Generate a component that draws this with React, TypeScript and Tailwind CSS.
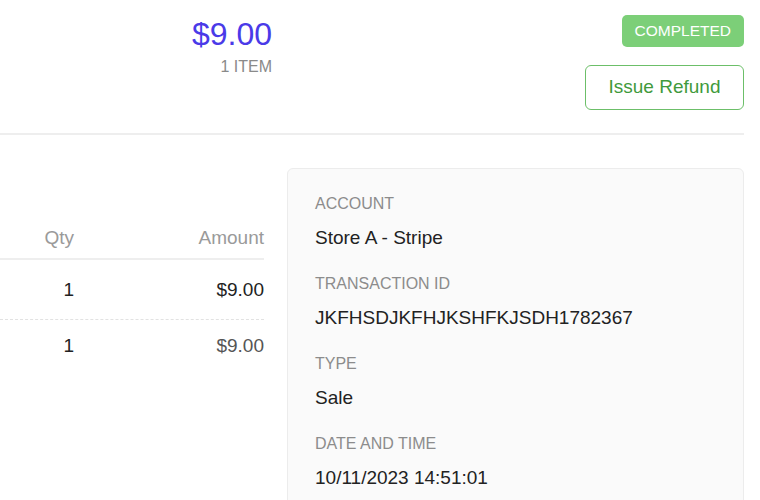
function DetailRow({ label, value }: { label: string; value: string }) {
	return (
		<div className="flex flex-col">
			<div className="text-[16px] leading-5 text-[#8c8c8c] uppercase">{label}</div>
			<div className="mt-3 text-[19px] leading-6 text-[#222]">{value}</div>
		</div>
	)
}

export default function App() {
	return (
		<div className="w-[760px] h-[500px] overflow-hidden bg-white pr-4 font-['Liberation_Sans',Arial,sans-serif]">
			<div className="flex justify-between h-[135px] border-b-2 border-[#eeeeee]">
				<div className="w-[272px] flex flex-col items-end pt-4">
					<div className="text-[32px] leading-9 text-[#4a3ae8]">$9.00</div>
					<div className="mt-[5px] text-[16px] leading-5 text-[#8a8a8a]">1 ITEM</div>
				</div>
				<div className="flex flex-col items-end pt-[15px]">
					<div className="h-[32px] px-[13px] flex items-center rounded-[5px] bg-[#7ccf78] text-white text-[15.5px]">
						COMPLETED
					</div>
					<button className="mt-[18px] w-[159px] h-[45px] rounded-[6px] border-[1.5px] border-[#6cbf69] bg-white text-[19px] text-[#3f9a3c]">
						Issue Refund
					</button>
				</div>
			</div>

			<div className="flex gap-[23px] pt-[33px]">
				<div className="w-[264px] pt-[58px]">
					<div className="grid grid-cols-[74px_1fr] text-right text-[19px] leading-6 text-[#9a9a9a] pb-2 border-b-2 border-[#eeeeee]">
						<div>Qty</div>
						<div>Amount</div>
					</div>
					<div className="grid grid-cols-[74px_1fr] text-right text-[19px] leading-6 text-[#222] pt-[18px] pb-[17px] border-b border-dashed border-[#e2e2e2]">
						<div>1</div>
						<div>$9.00</div>
					</div>
					<div className="grid grid-cols-[74px_1fr] text-right text-[19px] leading-6 pt-[14px]">
						<div className="text-[#222]">1</div>
						<div className="text-[#555]">$9.00</div>
					</div>
				</div>

				<div className="flex-1 h-[400px] rounded-md border border-[#ececec] bg-[#fafafa] pt-[25px] px-[27px] flex flex-col gap-6">
					<DetailRow label="Account" value="Store A - Stripe" />
					<DetailRow label="Transaction ID" value="JKFHSDJKFHJKSHFKJSDH1782367" />
					<DetailRow label="Type" value="Sale" />
					<DetailRow label="Date and time" value="10/11/2023 14:51:01" />
				</div>
			</div>
		</div>
	)
}
